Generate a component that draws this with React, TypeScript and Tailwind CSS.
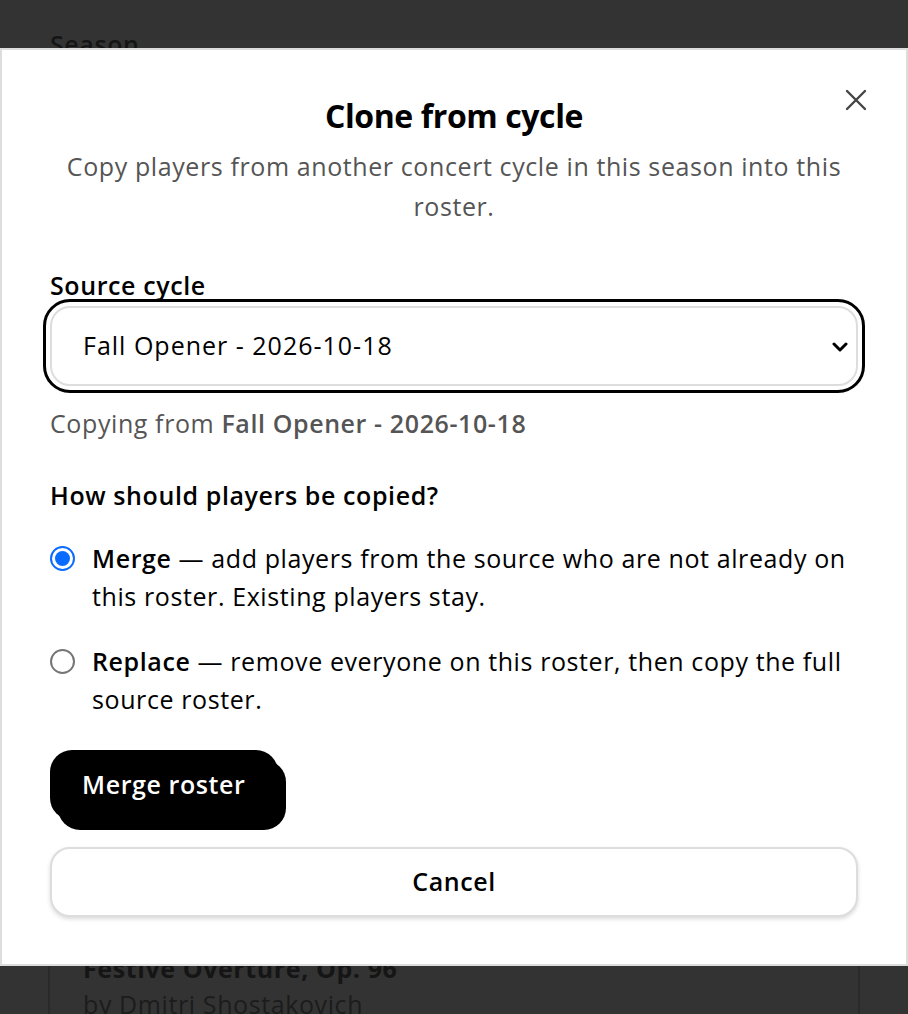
import { useState } from "react";

const font = { fontFamily: "'Open Sans', 'Noto Sans', sans-serif" };

type Mode = "merge" | "replace";

const options: { id: Mode; title: string; text: string }[] = [
  {
    id: "merge",
    title: "Merge",
    text: "add players from the source who are not already on this roster. Existing players stay.",
  },
  {
    id: "replace",
    title: "Replace",
    text: "remove everyone on this roster, then copy the full source roster.",
  },
];

function RadioDot({ checked }: { checked: boolean }) {
  return checked ? (
    <span className="mt-[7px] flex h-[25px] w-[25px] shrink-0 items-center justify-center rounded-full border-[2px] border-[#0a6cff] bg-white">
      <span className="h-[15px] w-[15px] rounded-full bg-[#0a6cff]" />
    </span>
  ) : (
    <span className="mt-[7px] h-[25px] w-[25px] shrink-0 rounded-full border-[2px] border-[#767676] bg-white" />
  );
}

export default function App() {
  const [mode, setMode] = useState<Mode>("merge");
  const source = "Fall Opener - 2026-10-18";

  return (
    <div
      className="relative flex h-[1014px] w-[908px] flex-col justify-between overflow-hidden bg-[#333333] text-[#151515] tracking-[0.6px]"
      style={font}
    >
      <div className="px-[50px] pt-[26px] text-[25px] font-semibold leading-[36px]">Season</div>

      <div className="mx-[48px] h-[120px] border-x-2 border-[#2a2a2a] px-[33px] pt-[56px]">
        <div className="text-[25px] font-bold leading-[36px]">Festive Overture, Op. 96</div>
        <div className="text-[25px] leading-[36px] text-[#1c1c1c]">by Dmitri Shostakovich</div>
      </div>

      <div className="absolute left-0 right-0 top-[48px] h-[918px] border-2 border-[#dddddd] bg-white px-[48px] pt-[46px] text-black">
        <button className="absolute right-[36px] top-[36px] flex h-[28px] w-[28px] items-center justify-center text-[#444]">
          <svg width="22" height="22" viewBox="0 0 22 22" fill="none" stroke="currentColor" strokeWidth="2.4" strokeLinecap="round">
            <path d="M2 2L20 20M20 2L2 20" />
          </svg>
        </button>

        <h2 className="text-center text-[32px] font-bold leading-[40px] tracking-[-0.4px]">Clone from cycle</h2>
        <p className="mx-auto mt-[10px] max-w-[800px] text-center text-[25px] leading-[40px] text-[#555555]">
          Copy players from another concert cycle in this season into this roster.
        </p>

        <label className="mt-[41px] block text-[25px] font-semibold leading-[36px]">Source cycle</label>
        <div className="relative mt-[3px]">
          <select
            className="h-[80px] w-full appearance-none rounded-[20px] border-2 border-[#dddddd] bg-white pl-[31px] text-[25px] tracking-[1px] text-black outline-[3px] outline-offset-[4px] outline-black"
            style={{ outlineStyle: "solid" }}
            defaultValue={source}
          >
            <option>{source}</option>
            <option>Winter Gala - 2026-12-12</option>
          </select>
          <svg
            className="pointer-events-none absolute right-[10px] top-[36px]"
            width="16"
            height="10"
            viewBox="0 0 16 10"
            fill="none"
            stroke="black"
            strokeWidth="3"
            strokeLinecap="round"
            strokeLinejoin="round"
          >
            <path d="M2 2L8 8L14 2" />
          </svg>
        </div>

        <p className="mt-[19px] text-[25px] leading-[36px] text-[#555555]">
          Copying from <span className="font-semibold">{source}</span>
        </p>

        <p className="mt-[36px] text-[25px] font-semibold leading-[36px]">How should players be copied?</p>

        <div className="mt-[26px] flex flex-col gap-[27px]">
          {options.map((option) => (
            <label
              key={option.id}
              className="flex cursor-pointer gap-[17px]"
              onClick={() => setMode(option.id)}
            >
              <RadioDot checked={mode === option.id} />
              <span className="text-[25px] leading-[38px]">
                <span className="font-semibold">{option.title}</span> — {option.text}
              </span>
            </label>
          ))}
        </div>

        <button className="mt-[32px] h-[70px] rounded-[22px] bg-black px-[32px] text-[25px] font-semibold text-white shadow-[8px_10px_0_#000]">
          {mode === "merge" ? "Merge roster" : "Replace roster"}
        </button>

        <button className="mt-[27px] block h-[70px] w-full rounded-[20px] border-2 border-[#dddddd] bg-white text-[25px] font-semibold text-black shadow-[0_2px_4px_rgba(0,0,0,0.15)]">
          Cancel
        </button>
      </div>
    </div>
  );
}
